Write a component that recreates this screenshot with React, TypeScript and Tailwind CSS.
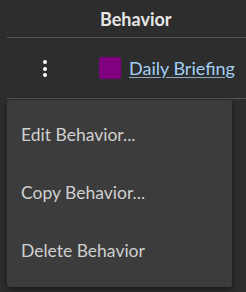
import React from "react";

export default function App() {
  const font = { fontFamily: "Lato, 'Open Sans', sans-serif" };
  return (
    <div className="relative w-[246px] h-[292px] bg-[#2d2d2d] overflow-hidden" style={font}>
      <div className="ml-[7px]">
        <div className="flex h-[38px] items-center border-b border-[#555555]">
          <div className="w-[93px]" />
          <div className="text-[18px] font-bold text-[#e6e6e6] leading-none">Behavior</div>
        </div>
        <div className="flex h-[61px] items-center border-b border-[#555555]">
          <div className="w-[92px] flex pl-[36px]">
            <div className="flex flex-col items-center gap-[2.5px] mt-[1px]">
              <span className="block w-[4px] h-[4px] rounded-full bg-white" />
              <span className="block w-[4px] h-[4px] rounded-full bg-white" />
              <span className="block w-[4px] h-[4px] rounded-full bg-white" />
            </div>
          </div>
          <div className="flex items-center gap-[8px]">
            <span className="block w-[22px] h-[22px] rounded-[3px] bg-[#800080]" />
            <span className="text-[18px] text-[#a3d0f5] underline underline-offset-2 decoration-[#8fa7bd]">
              Daily Briefing
            </span>
          </div>
        </div>
      </div>
      <div className="absolute left-[7px] top-[100px] w-[225px] h-[187px] bg-[#3c3c3c] rounded-[3px] shadow-[0_2px_6px_rgba(0,0,0,0.5)] py-[6px]">
        {["Edit Behavior...", "Copy Behavior...", "Delete Behavior"].map((t) => (
          <div key={t} className="h-[58px] flex items-center pl-[14px] text-[17.5px] text-[#d0d0d0]">
            {t}
          </div>
        ))}
      </div>
    </div>
  );
}
